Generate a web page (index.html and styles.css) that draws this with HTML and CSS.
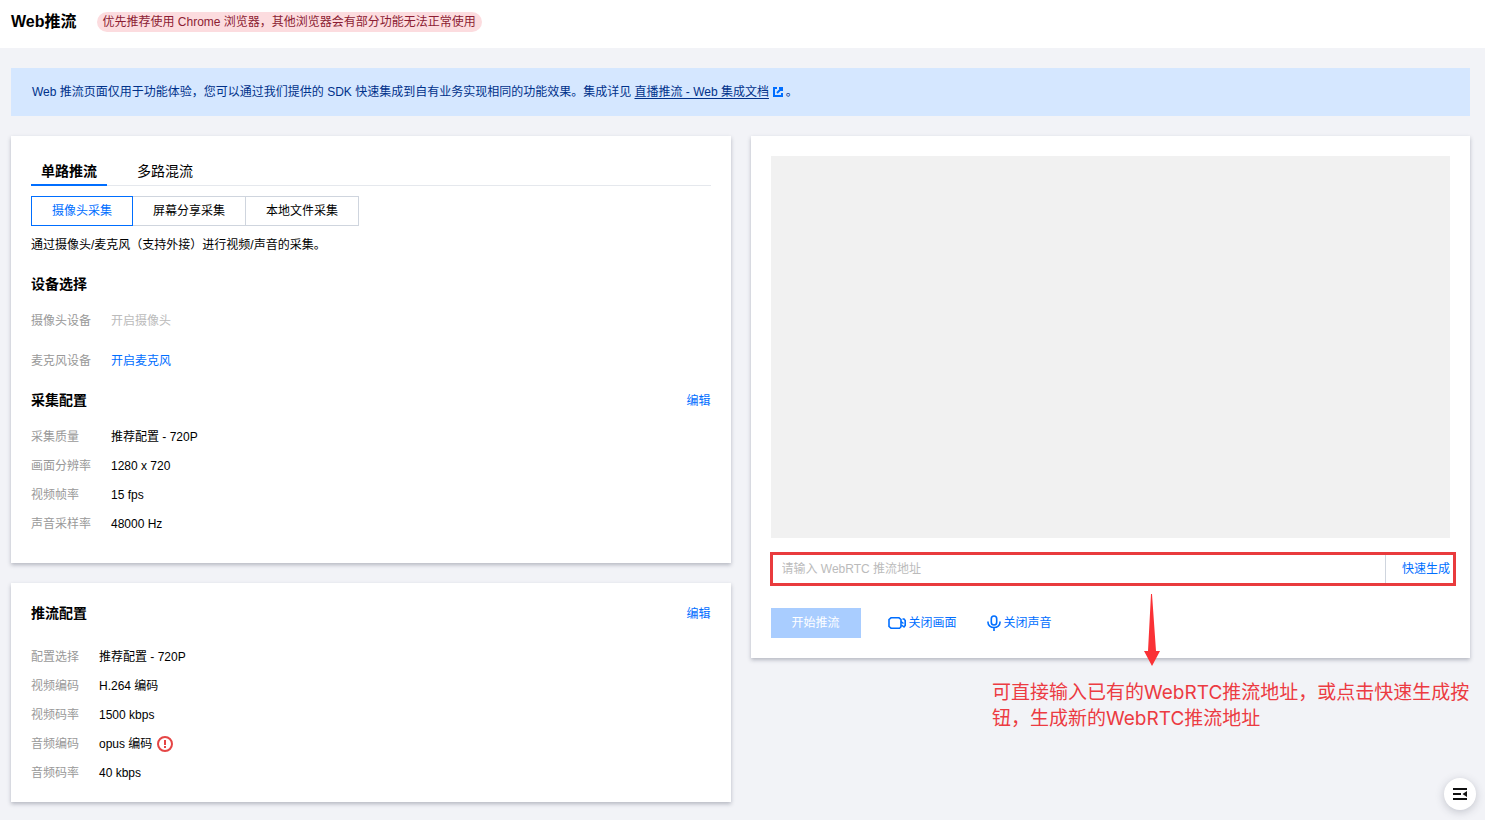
FILE: index.html
```html
<!DOCTYPE html>
<html lang="zh-CN">
<head>
  <meta charset="UTF-8">
  <title>Web推流</title>
  <link rel="stylesheet" href="styles.css">
</head>
<body>
  <header class="header">
    <h1>Web推流</h1>
    <span class="badge">优先推荐使用 Chrome 浏览器，其他浏览器会有部分功能无法正常使用</span>
  </header>

  <main class="content">
    <div class="alert">
      Web 推流页面仅用于功能体验，您可以通过我们提供的 SDK 快速集成到自有业务实现相同的功能效果。集成详见
      <a href="#">直播推流 - Web 集成文档</a>
      <svg class="icon-link" width="10" height="10" viewBox="0 0 10 10" fill="none" stroke="#006eff" stroke-width="2">
        <path d="M4 1H1v8h8V6M6 1h3v3M9 1L4 6"/>
      </svg>
      。
    </div>

    <div class="columns">
      <div class="column">
        <section class="card">
          <div class="tabs" role="tablist">
            <button class="tab active" role="tab" aria-selected="true">单路推流</button>
            <button class="tab" role="tab" aria-selected="false">多路混流</button>
          </div>
          <div class="segment">
            <button class="active">摄像头采集</button>
            <button>屏幕分享采集</button>
            <button>本地文件采集</button>
          </div>
          <p class="desc">通过摄像头/麦克风（支持外接）进行视频/声音的采集。</p>

          <h2>设备选择</h2>
          <dl class="list devices">
            <dt>摄像头设备</dt>
            <dd><button class="link" disabled>开启摄像头</button></dd>
            <dt>麦克风设备</dt>
            <dd><button class="link">开启麦克风</button></dd>
          </dl>

          <div class="title-row">
            <h2>采集配置</h2>
            <button class="link">编辑</button>
          </div>
          <dl class="list capture">
            <dt>采集质量</dt>
            <dd>推荐配置 - 720P</dd>
            <dt>画面分辨率</dt>
            <dd>1280 x 720</dd>
            <dt>视频帧率</dt>
            <dd>15 fps</dd>
            <dt>声音采样率</dt>
            <dd>48000 Hz</dd>
          </dl>
        </section>

        <section class="card">
          <div class="title-row">
            <h2>推流配置</h2>
            <button class="link">编辑</button>
          </div>
          <dl class="list push">
            <dt>配置选择</dt>
            <dd>推荐配置 - 720P</dd>
            <dt>视频编码</dt>
            <dd>H.264 编码</dd>
            <dt>视频码率</dt>
            <dd>1500 kbps</dd>
            <dt>音频编码</dt>
            <dd>opus 编码
              <svg width="16" height="16" viewBox="0 0 16 16">
                <circle cx="8" cy="8" r="7" fill="none" stroke="#e54545" stroke-width="2"/>
                <path d="M7 4h2v5H7zM7 10h2v2H7z" fill="#e54545"/>
              </svg>
            </dd>
            <dt>音频码率</dt>
            <dd>40 kbps</dd>
          </dl>
        </section>
      </div>

      <div class="column">
        <section class="card">
          <div class="preview"></div>
          <div class="address">
            <input type="text" placeholder="请输入 WebRTC 推流地址" aria-label="推流地址">
            <button class="link">快速生成</button>
          </div>
          <div class="actions">
            <button class="start" disabled>开始推流</button>
            <button class="link">
              <svg width="19" height="14" viewBox="0 0 19 14" fill="none" stroke="#006eff" stroke-width="1.6">
                <path d="M12 12.200H3L1 10.500V3.500L3 1.800H11L13 3.500V10.500L12 12.200"/>
                <path d="M13 5.500L15.500 7.500M14.500 3H16L17.200 4.500V9.500L16 11L13.500 9"/>
              </svg>
              <span>关闭画面</span>
            </button>
            <button class="link mic">
              <svg width="14" height="16" viewBox="0 0 14 16" fill="none" stroke="#006eff" stroke-width="1.6">
                <rect x="4.3" y="1" width="5.4" height="9" rx="2.7"/>
                <path d="M1 6.5v1a6 5 0 0 0 12 0v-1M7 12.5V16"/>
              </svg>
              <span>关闭声音</span>
            </button>
          </div>
          <!-- 指向说明文字的箭头 -->
          <svg class="arrow" width="16" height="72" viewBox="0 0 16 72">
            <path d="M7 0h1l4 57h4L8 72 0 57h4z" fill="#fa3236"/>
          </svg>
        </section>
        <p class="note">可直接输入已有的WebRTC推流地址，或点击快速生成按钮，生成新的WebRTC推流地址</p>
      </div>
    </div>
  </main>

  <button class="float-btn" aria-label="展开菜单">
    <svg width="14" height="12" viewBox="0 0 14 12">
      <path d="M0 0h14v2H0zM0 5h8v2H0zM0 10h14v2H0zM14 3v6L9.500 6z" fill="#111"/>
    </svg>
  </button>
</body>
</html>
```
FILE: styles.css
```css
* {
  box-sizing: border-box;
}
body {
  margin: 0;
  min-height: 100vh;
  background: #f2f3f7;
  color: #000;
  font-family: "Liberation Sans", "Noto Sans CJK SC", sans-serif;
  font-size: 12px;
  line-height: 20px;
}
h1, h2, p, dl, dd {
  margin: 0;
}
button, input {
  font: inherit;
  color: inherit;
  background: none;
  border: none;
  padding: 0;
}
button {
  cursor: pointer;
}
h2 {
  font-size: 14px;
}

.header {
  display: flex;
  align-items: flex-start;
  gap: 20px;
  height: 48px;
  padding: 12px 11px;
  background: #fff;
}
.header h1 {
  font-size: 16px;
}
.badge {
  padding: 0 6px;
  border-radius: 10px;
  background: #fcdcdf;
  color: #8c1d33;
}

.content {
  padding: 20px 15px 18px 11px;
}
.alert {
  padding: 14px 21px;
  margin-bottom: 20px;
  background: #d5e7ff;
  color: #00318a;
}
.alert a {
  color: inherit;
  text-underline-offset: 2px;
}
.icon-link {
  margin: 0 -1px 0 1px;
  vertical-align: -1px;
}

.columns {
  display: grid;
  grid-template-columns: 1fr 1fr;
  gap: 20px;
  align-items: start;
}
.column {
  display: flex;
  flex-direction: column;
  gap: 20px;
}
.card {
  position: relative;
  padding: 20px 20px 19px;
  background: #fff;
  box-shadow: 0 2px 4px rgba(54, 58, 80, 0.32);
}

.tabs {
  display: flex;
  gap: 20px;
  box-shadow: inset 0 -1px #e5e8ed;
  font-size: 14px;
}
.tab {
  height: 30px;
  padding: 0 10px;
}
.tab.active {
  font-weight: bold;
  box-shadow: inset 0 -2px #006eff;
}
.segment {
  display: flex;
  margin: 10px 0 9px;
}
.segment button {
  height: 30px;
  padding: 0 20px;
  border: 1px solid #cfd5de;
}
.segment button + button {
  margin-left: -1px;
}
.segment .active {
  position: relative;
  z-index: 1;
  border-color: #006eff;
  color: #006eff;
}
.desc {
  margin-bottom: 19px;
}
.title-row {
  display: flex;
  justify-content: space-between;
  align-items: baseline;
}
.link {
  color: #006eff;
}
.link:disabled {
  color: #bbb;
}

.list {
  display: grid;
  grid-template-columns: 80px 1fr;
  row-gap: 9px;
}
.list dt {
  color: #999;
}
.list dd svg {
  margin-left: 1px;
  vertical-align: -4px;
}
.list dt, .list dd {
  height: 20px;
}
.devices {
  row-gap: 20px;
  margin: 17px 0 19px;
}
.capture {
  margin: 16px 0 10px;
}
.push {
  grid-template-columns: 68px 1fr;
  margin-top: 23px;
}

.preview {
  aspect-ratio: 16 / 9;
  background: #f1f1f1;
}
.address {
  display: flex;
  height: 34px;
  margin: 14px -6px 22px -1px;
  border: 3px solid #e93b3d;
}
.address input {
  flex: 1;
  padding: 0 9px;
}
.address input::placeholder {
  color: #bbb;
}
.address .link {
  padding: 0 3px 0 16px;
  border-left: 1px solid #cfd5de;
}
.actions {
  display: flex;
  align-items: center;
  margin-bottom: 1px;
}
.start {
  width: 90px;
  height: 30px;
  margin-right: 27px;
  background: #a9cdff;
  color: #fff;
}
.actions .link {
  display: flex;
  align-items: center;
  gap: 2px;
  margin-right: 30px;
}
.actions .mic {
  gap: 3px;
}
.arrow {
  position: absolute;
  right: 310px;
  bottom: -8px;
}
.note {
  align-self: flex-end;
  max-width: 484px;
  margin: 2px -6px 0 0;
  color: #ec3b42;
  font-family: Inter, "Noto Sans CJK SC", sans-serif;
  font-size: 19px;
  line-height: 26px;
}

.float-btn {
  position: fixed;
  right: 9px;
  bottom: 10px;
  display: flex;
  align-items: center;
  justify-content: center;
  width: 32px;
  height: 32px;
  border-radius: 50%;
  background: #fff;
  box-shadow: 0 2px 8px rgba(54, 58, 80, 0.25);
}
```
